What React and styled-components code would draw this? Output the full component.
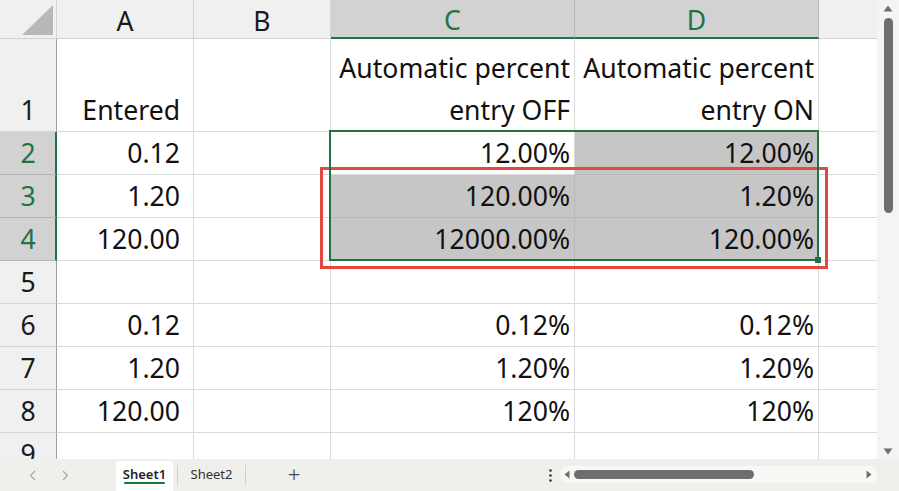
import React from 'react';
import styled, { createGlobalStyle, css } from 'styled-components';

const GlobalStyle = createGlobalStyle`
  html, body {
    margin: 0;
    padding: 0;
    overflow: hidden;
    background: #ffffff;
  }
`;

const GREEN = '#217346';
const GRID = '#dadada';

const Frame = styled.div`
  width: 899px;
  height: 491px;
  display: flex;
  flex-direction: column;
  font-family: "Noto Sans", "Open Sans", sans-serif;
  color: #111;
  overflow: hidden;
`;

const Workspace = styled.div`
  height: 459px;
  display: flex;
  overflow: hidden;
`;

const Sheet = styled.div`
  position: relative;
  display: grid;
  grid-template-columns: 57px 137px 137px 244px 244px 58px;
  grid-template-rows: 39px 93px repeat(8, 43px);
  width: 877px;
  align-self: flex-start;
`;

const baseCell = css`
  box-sizing: border-box;
  border-right: 1px solid ${GRID};
  border-bottom: 1px solid ${GRID};
  display: flex;
  align-items: flex-end;
  font-size: 26.6px;
  white-space: nowrap;
  overflow: hidden;
`;

const Corner = styled.div`
  ${baseCell};
  background: #f0f0f0;
  border-bottom-color: #d4d4d4;
  border-right-color: #d4d4d4;
  position: relative;
`;

const ColHeader = styled.div`
  ${baseCell};
  justify-content: center;
  line-height: 33px;
  background: ${({ $selected }) => ($selected ? '#d2d2d2' : '#f0f0f0')};
  color: ${({ $selected }) => ($selected ? GREEN : '#1a1a1a')};
  border-right-color: ${({ $selected }) => ($selected ? '#b6b6b6' : '#d4d4d4')};
  border-bottom: ${({ $selected }) => ($selected ? `2px solid ${GREEN}` : '1px solid #d4d4d4')};
  ${({ $last }) => $last && 'border-right: none;'}
`;

const RowHeader = styled.div`
  ${baseCell};
  justify-content: center;
  line-height: 42px;
  background: ${({ $selected }) => ($selected ? '#d2d2d2' : '#f0f0f0')};
  color: ${({ $selected }) => ($selected ? GREEN : '#1a1a1a')};
  border-bottom-color: ${({ $selected }) => ($selected ? '#b6b6b6' : '#d4d4d4')};
  border-right: ${({ $selected }) => ($selected ? `2px solid ${GREEN}` : '1px solid #9f9f9f')};
  padding-left: ${({ $selected }) => ($selected ? '1px' : '0')};
`;

const Cell = styled.div`
  ${baseCell};
  flex-direction: column;
  justify-content: flex-end;
  align-items: stretch;
  text-align: right;
  line-height: 42px;
  padding-right: ${({ $pad }) => $pad}px;
  background: ${({ $fill }) => ($fill ? '#c6c6c6' : '#ffffff')};
  border-right-color: ${({ $fill }) => ($fill ? '#b8b8b8' : GRID)};
  border-bottom-color: ${({ $fill }) => ($fill ? '#b8b8b8' : GRID)};
  ${({ $last }) => $last && 'border-right: none;'}
`;

const SelectionBox = styled.div`
  position: absolute;
  left: 329px;
  top: 130px;
  width: 490px;
  height: 131px;
  box-sizing: border-box;
  border: 2px solid ${GREEN};
  pointer-events: none;
`;

const FillHandle = styled.div`
  position: absolute;
  left: 815px;
  top: 257px;
  width: 6px;
  height: 6px;
  background: ${GREEN};
`;

const Highlight = styled.div`
  position: absolute;
  left: 320px;
  top: 167px;
  width: 508px;
  height: 102px;
  box-sizing: border-box;
  border: 3px solid #e2483e;
  pointer-events: none;
`;

const VScroll = styled.div`
  width: 22px;
  background: #f4f4f4;
  display: flex;
  flex-direction: column;
  align-items: center;
  padding-top: 5px;
  box-sizing: border-box;
`;

const Thumb = styled.div`
  width: 9px;
  border-radius: 5px;
  background: #6e6e6e;
  height: ${({ $size }) => $size}px;
  margin: ${({ $gap }) => $gap};
`;

const Arrow = styled.svg`
  display: block;
  flex: none;
`;

const Spacer = styled.div`
  flex: 1;
`;

const TabBar = styled.div`
  height: 32px;
  background: #efefeb;
  display: flex;
  align-items: flex-end;
  font-size: 13px;
  color: #333;
`;

const NavGroup = styled.div`
  width: 116px;
  height: 32px;
  display: flex;
  align-items: center;
  gap: 26px;
  padding-left: 29px;
  box-sizing: border-box;
`;

const Tab = styled.div`
  position: relative;
  width: ${({ $w }) => $w}px;
  height: 30px;
  display: flex;
  align-items: center;
  justify-content: center;
  padding-bottom: 5px;
  box-sizing: border-box;
  background: ${({ $active }) => ($active ? '#ffffff' : 'transparent')};
  border-radius: 4px 4px 0 0;
  font-weight: ${({ $active }) => ($active ? 600 : 400)};
  color: ${({ $active }) => ($active ? '#1f1f1f' : '#333')};
  ${({ $active }) =>
    $active &&
    css`
      &::after {
        content: '';
        position: absolute;
        left: 8px;
        right: 8px;
        bottom: 7px;
        height: 2px;
        border-radius: 1px;
        background: #107c41;
      }
    `}
`;

const TabDivider = styled.div`
  width: 1px;
  height: 20px;
  background: #cfcfcb;
  align-self: center;
  margin: 0 ${({ $m }) => $m}px 0 ${({ $ml }) => $ml}px;
`;

const AddButton = styled.div`
  width: 96px;
  height: 32px;
  display: flex;
  align-items: center;
  justify-content: center;
  font-size: 22px;
  font-weight: 300;
  color: #444;
  padding-bottom: 2px;
  box-sizing: border-box;
`;

const Dots = styled.div`
  width: 19px;
  height: 32px;
  display: flex;
  align-items: center;
  justify-content: center;
`;

const HScroll = styled.div`
  width: 317px;
  height: 17px;
  margin: 0 22px 8px 0;
  border-radius: 8px;
  background: #f8f8f6;
  display: flex;
  align-items: center;
  padding: 0 5px 0 4px;
  box-sizing: border-box;
`;

const HThumb = styled.div`
  width: 180px;
  height: 9px;
  border-radius: 5px;
  background: #6e6e6e;
  margin-left: 4px;
`;

const rows = [
  { n: 1, h: 93, a: 'Entered', c: ['Automatic percent', 'entry OFF'], d: ['Automatic percent', 'entry ON'] },
  { n: 2, a: '0.12', c: '12.00%', d: '12.00%' },
  { n: 3, a: '1.20', c: '120.00%', d: '1.20%' },
  { n: 4, a: '120.00', c: '12000.00%', d: '120.00%' },
  { n: 5 },
  { n: 6, a: '0.12', c: '0.12%', d: '0.12%' },
  { n: 7, a: '1.20', c: '1.20%', d: '1.20%' },
  { n: 8, a: '120.00', c: '120%', d: '120%' },
  { n: 9 },
];

const isSelectedRow = (n) => n >= 2 && n <= 4;
const isFilled = (col, n) => (col === 'd' && n >= 2 && n <= 4) || (col === 'c' && n >= 3 && n <= 4);

const lines = (v) => (Array.isArray(v) ? v.map((l) => <div key={l}>{l}</div>) : v);

export default function App() {
  return (
    <Frame>
      <GlobalStyle />
      <Workspace>
        <Sheet>
          <Corner>
            <svg width="56" height="38" style={{ position: 'absolute', left: 0, top: 0 }}>
              <polygon points="22,35 53,35 53,5" fill="#b8b8b8" />
            </svg>
          </Corner>
          <ColHeader>A</ColHeader>
          <ColHeader>B</ColHeader>
          <ColHeader $selected>C</ColHeader>
          <ColHeader $selected>D</ColHeader>
          <ColHeader $last />

          {rows.map((r) => (
            <React.Fragment key={r.n}>
              <RowHeader $selected={isSelectedRow(r.n)}>{r.n}</RowHeader>
              <Cell $pad={13}>{lines(r.a)}</Cell>
              <Cell $pad={4} />
              <Cell $pad={4} $fill={isFilled('c', r.n)}>{lines(r.c)}</Cell>
              <Cell $pad={4} $fill={isFilled('d', r.n)}>{lines(r.d)}</Cell>
              <Cell $pad={4} $last />
            </React.Fragment>
          ))}

          <Highlight />
          <SelectionBox />
          <FillHandle />
        </Sheet>
        <VScroll>
          <Arrow width="10" height="7" viewBox="0 0 10 7">
            <polygon points="5,0.5 9.5,6.5 0.5,6.5" fill="#6e6e6e" />
          </Arrow>
          <Thumb $size={195} $gap="6px 0 0 0" />
          <Spacer />
          <Arrow width="10" height="7" viewBox="0 0 10 7" style={{ marginBottom: 4 }}>
            <polygon points="0.5,0.5 9.5,0.5 5,6.5" fill="#6e6e6e" />
          </Arrow>
        </VScroll>
      </Workspace>

      <TabBar>
        <NavGroup>
          <Arrow width="7" height="11" viewBox="0 0 7 11">
            <polyline points="6,1 1.5,5.5 6,10" fill="none" stroke="#a8a8a8" strokeWidth="1.2" />
          </Arrow>
          <Arrow width="7" height="11" viewBox="0 0 7 11">
            <polyline points="1,1 5.5,5.5 1,10" fill="none" stroke="#a8a8a8" strokeWidth="1.2" />
          </Arrow>
        </NavGroup>
        <Tab $active $w={57}>Sheet1</Tab>
        <TabDivider $ml={4} $m={0} />
        <Tab $w={67}>Sheet2</Tab>
        <TabDivider $ml={0} $m={0} />
        <AddButton>+</AddButton>
        <Spacer />
        <Dots>
          <svg width="3" height="13" viewBox="0 0 3 13">
            <circle cx="1.5" cy="1.5" r="1.3" fill="#333" />
            <circle cx="1.5" cy="6.5" r="1.3" fill="#333" />
            <circle cx="1.5" cy="11.5" r="1.3" fill="#333" />
          </svg>
        </Dots>
        <HScroll>
          <Arrow width="6" height="9" viewBox="0 0 6 9">
            <polygon points="0.5,4.5 5.5,0.5 5.5,8.5" fill="#6e6e6e" />
          </Arrow>
          <HThumb />
          <Spacer />
          <Arrow width="6" height="9" viewBox="0 0 6 9">
            <polygon points="0.5,0.5 5.5,4.5 0.5,8.5" fill="#6e6e6e" />
          </Arrow>
        </HScroll>
      </TabBar>
    </Frame>
  );
}
